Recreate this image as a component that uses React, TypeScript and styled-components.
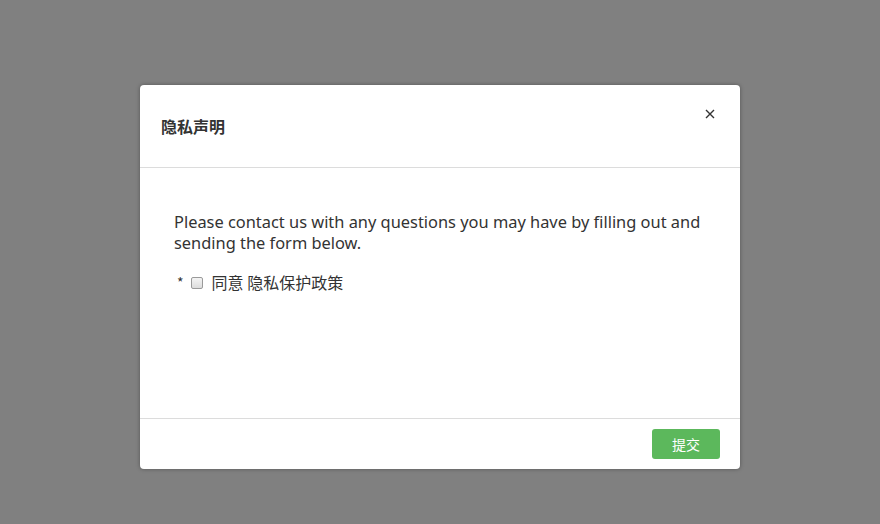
import React from "react";
import styled, { createGlobalStyle } from "styled-components";

const Global = createGlobalStyle`
  html, body { margin: 0; padding: 0; }
  body {
    width: 880px; height: 524px; overflow: hidden;
    background: #808080;
    font-family: "Noto Sans", "Noto Sans CJK SC", sans-serif;
    color: #333;
  }
`;

const Backdrop = styled.div`
  width: 880px;
  height: 524px;
  display: flex;
  justify-content: center;
  align-items: flex-start;
  padding-top: 85px;
  box-sizing: border-box;
`;

const Dialog = styled.div`
  width: 600px;
  height: 384px;
  background: #fff;
  border-radius: 4px;
  box-shadow: 0 0 4px rgba(0, 0, 0, 0.35);
  display: flex;
  flex-direction: column;
  box-sizing: border-box;
`;

const Header = styled.div`
  height: 83px;
  border-bottom: 1px solid #dcdcdc;
  display: flex;
  align-items: center;
  padding: 0 24px 0 21px;
  position: relative;
  box-sizing: border-box;
`;

const Title = styled.h4`
  margin: 0;
  font-size: 16px;
  font-weight: 700;
  color: #333;
  font-family: "Noto Sans CJK SC", sans-serif;
`;

const Close = styled.button`
  position: absolute;
  top: 23px;
  right: 24px;
  width: 12px;
  height: 12px;
  padding: 0;
  border: 0;
  background: transparent;
  display: flex;
  align-items: center;
  justify-content: center;
`;

const Body = styled.div`
  flex: 1;
  padding: 43px 34px 0 34px;
  font-size: 16px;
  line-height: 21px;
`;

const Para = styled.p`
  margin: 0 0 19px 0;
  font-family: "Noto Sans", "Noto Sans CJK SC", sans-serif;
  font-size: 16.4px;
`;

const Agree = styled.label`
  display: flex;
  align-items: center;
  padding-left: 3px;
  font-family: "Noto Sans CJK SC", sans-serif;
  font-size: 16px;
`;

const Star = styled.span`
  font-size: 14px;
  color: #333;
  margin-right: 7px;
`;

const Box = styled.span`
  width: 10px;
  height: 10px;
  border: 1px solid #9a9a9a;
  border-radius: 2px;
  background: linear-gradient(#f4f4f4, #dcdcdc);
  margin-right: 9px;
`;

const Footer = styled.div`
  height: 51px;
  border-top: 1px solid #dcdcdc;
  display: flex;
  align-items: center;
  justify-content: flex-end;
  padding: 0 20px;
  box-sizing: border-box;
`;

const Submit = styled.button`
  width: 68px;
  height: 30px;
  background: #5cb85c;
  border: 0;
  border-radius: 3px;
  color: #fff;
  font-size: 14px;
  font-family: "Noto Sans CJK SC", sans-serif;
  padding: 0;
`;

export default function App() {
  return (
    <>
      <Global />
      <Backdrop>
        <Dialog>
          <Header>
            <Title>隐私声明</Title>
            <Close aria-label="close">
              <svg width="10" height="10" viewBox="0 0 10 10">
                <path d="M1 1L9 9M9 1L1 9" stroke="#333" strokeWidth="1.4" />
              </svg>
            </Close>
          </Header>
          <Body>
            <Para>
              Please contact us with any questions you may have by filling out and
              sending the form below.
            </Para>
            <Agree>
              <Star>*</Star>
              <Box />
              <span>同意 隐私保护政策</span>
            </Agree>
          </Body>
          <Footer>
            <Submit>提交</Submit>
          </Footer>
        </Dialog>
      </Backdrop>
    </>
  );
}
